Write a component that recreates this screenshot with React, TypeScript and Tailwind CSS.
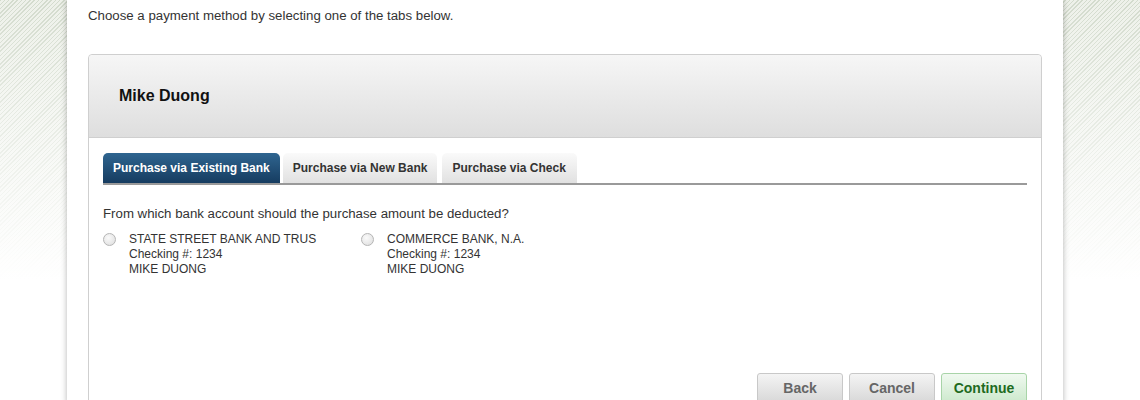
const accounts = [
  { bank: 'STATE STREET BANK AND TRUS', number: '1234', owner: 'MIKE DUONG' },
  { bank: 'COMMERCE BANK, N.A.', number: '1234', owner: 'MIKE DUONG' },
];

const tabs = ['Purchase via Existing Bank', 'Purchase via New Bank', 'Purchase via Check'];

const App = () => {
  return (
    <div className="min-h-[400px] w-full overflow-hidden font-['Liberation_Sans',Arial,sans-serif] bg-[linear-gradient(to_bottom,rgba(255,255,255,0)_0px,rgba(255,255,255,0.6)_160px,#fff_280px),repeating-linear-gradient(135deg,#d3dbcd_0px,#d3dbcd_1px,#eef1ea_1px,#eef1ea_3px)]">
      <div className="ml-[67px] w-[996px] min-h-[400px] bg-white px-[21px] pt-[8px] shadow-[0_0_6px_rgba(0,0,0,0.3)]">
        <p className="text-[13.25px] leading-[16px] text-[#333]">
          Choose a payment method by selecting one of the tabs below.
        </p>

        {/* Payment panel */}
        <div className="mt-[30px] rounded-t-[4px] border border-[#cfcfcf]">
          <div className="flex h-[83px] items-center rounded-t-[4px] border-b border-[#cfcfcf] bg-[linear-gradient(to_bottom,#f6f6f6,#dedede)] pl-[30px]">
            <h2 className="text-[16px] font-bold text-[#111]">Mike Duong</h2>
          </div>

          <div className="px-[14px] pt-[15px]">
            <div className="flex gap-[3px] border-b-2 border-[#9a9a9a]">
              {tabs.map((tab, i) => (
                <div
                  key={tab}
                  className={
                    i === 0
                      ? 'flex h-[30px] items-center rounded-t-[5px] bg-[linear-gradient(to_bottom,#2f6590,#163c60)] px-[10px] text-[12px] font-bold text-white'
                      : i === 1
                        ? 'flex h-[30px] items-center rounded-t-[5px] bg-[linear-gradient(to_bottom,#fafafa,#e1e1e1)] px-[10px] text-[12px] font-bold text-[#333]'
                        : 'ml-[2px] flex h-[30px] items-center rounded-t-[5px] bg-[linear-gradient(to_bottom,#fafafa,#e1e1e1)] px-[10px] pr-[11px] text-[12px] font-bold text-[#333]'
                  }
                >
                  {tab}
                </div>
              ))}
            </div>

            <p className="mt-[21px] text-[13.25px] leading-[16px] text-[#333]">
              From which bank account should the purchase amount be deducted?
            </p>

            <div className="mt-[10px] flex">
              {accounts.map((acc) => (
                <label key={acc.bank} className="flex w-[258px] items-start">
                  <span className="mt-[1px] h-[13px] w-[13px] shrink-0 rounded-full border border-[#b5b5b5] bg-[radial-gradient(circle_at_40%_35%,#fafafa,#dcdcdc)]" />
                  <span className="ml-[13px] text-[12px] leading-[15px] text-[#333]">
                    {acc.bank}
                    <br />
                    Checking #: {acc.number}
                    <br />
                    {acc.owner}
                  </span>
                </label>
              ))}
            </div>

            <div className="mt-[96px] flex justify-end gap-[6px]">
              <button className="h-[30px] w-[86px] rounded-[3px] border border-[#c8c8c8] bg-[linear-gradient(to_bottom,#f4f4f4,#d8d8d8)] text-[14px] font-bold text-[#666]">
                Back
              </button>
              <button className="h-[30px] w-[86px] rounded-[3px] border border-[#c8c8c8] bg-[linear-gradient(to_bottom,#f4f4f4,#d8d8d8)] text-[14px] font-bold text-[#666]">
                Cancel
              </button>
              <button className="h-[30px] w-[86px] rounded-[3px] border border-[#a8d4a8] bg-[linear-gradient(to_bottom,#f0f9f0,#cde9cd)] text-[14px] font-bold text-[#1f6b1f]">
                Continue
              </button>
            </div>
          </div>
        </div>
      </div>
    </div>
  );
};

export default App;
